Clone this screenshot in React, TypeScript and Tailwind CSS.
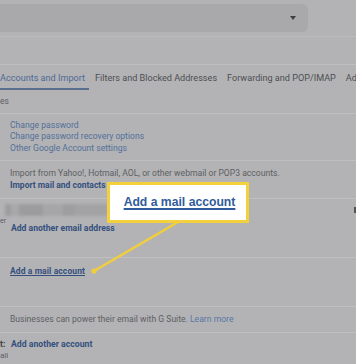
const Line = () => <div className="h-px bg-[#bfbfc1]" />;

export default function App() {
  return (
    <div
      className="relative w-[356px] h-[364px] overflow-hidden bg-[#b3b3b5] text-[8.6px] text-[#5d5f63]"
      style={{ fontFamily: 'Roboto, "Liberation Sans", Arial, sans-serif' }}
    >
      {/* search bar */}
      <div className="pt-[4px]">
        <div className="w-[308px] h-[28px] bg-[#a9a9ab] rounded-r-[6px] flex items-center justify-end pr-[12px]">
          <span className="w-0 h-0 border-l-[3.5px] border-r-[3.5px] border-t-[4px] border-l-transparent border-r-transparent border-t-[#3e3f42]" />
        </div>
      </div>
      <div className="mt-[4px] h-px bg-[#bcbcbe]" />
      <div className="h-[27px]" />
      <Line />

      {/* tabs */}
      <div className="h-[25px] flex items-center gap-[10px] whitespace-nowrap text-[9.1px] text-[#4d4f53] pt-[2px]">
        <div className="relative h-full flex items-center text-[#4d6a95]">
          Accounts and Import
          <div className="absolute left-0 right-[-4px] bottom-0 h-[2px] bg-[#5a6e8e]" />
        </div>
        <span>Filters and Blocked Addresses</span>
        <span>Forwarding and POP/IMAP</span>
        <span>Ad</span>
      </div>
      <div className="h-[23px] flex items-center text-[8.5px]">es</div>
      <Line />

      {/* change password */}
      <div className="h-[46px] flex flex-col justify-center pl-[10px] leading-[11.5px] text-[#52709a]">
        <span>Change password</span>
        <span>Change password recovery options</span>
        <span>Other Google Account settings</span>
      </div>
      <Line />

      {/* import */}
      <div className="h-[37px] flex flex-col justify-center pl-[10px] leading-[11.5px]">
        <span>Import from Yahoo!, Hotmail, AOL, or other webmail or POP3 accounts.</span>
        <span className="font-bold text-[#34507e] text-[8.5px]">Import mail and contacts</span>
      </div>
      <Line />

      {/* send mail as */}
      <div className="h-[58px] relative flex">
        <div className="w-[10px] pt-[17px] text-[7px]">er</div>
        <div className="flex flex-col pt-[4px]">
          <div className="flex h-[12px] ml-[-5px] w-[103px] blur-[1.5px] mt-[1px]">
            <div className="w-[6px] bg-[#9d9d9f]" />
            <div className="w-[8px] bg-[#a8a8aa]" />
            <div className="w-[24px] bg-[#9c9c9e]" />
            <div className="w-[20px] bg-[#a6a6a8]" />
            <div className="w-[12px] bg-[#9e9ea0]" />
            <div className="w-[33px] bg-[#a3a3a5]" />
          </div>
          <span className="mt-[6px] ml-[1px] font-bold text-[#34507e] text-[8.6px]">Add another email address</span>
        </div>
        <div className="absolute right-[-2px] top-[8px] w-[4px] h-[6px] bg-[#505256] blur-[0.5px]" />
      </div>
      <Line />

      {/* check mail */}
      <div className="h-[48px] pl-[10px] pt-[7px]">
        <span className="font-bold text-[#34507e] text-[8.5px] tracking-[0.1px] underline underline-offset-1">Add a mail account</span>
      </div>
      <Line />

      {/* g suite */}
      <div className="h-[25px] flex items-center pl-[10px]">
        Businesses can power their email with G Suite.&nbsp;<span className="text-[#5877a5]">Learn more</span>
      </div>
      <Line />

      {/* grant access */}
      <div className="flex pt-[5px] leading-[12px]">
        <div className="w-[11px] flex flex-col">
          <span className="font-bold text-[#3d3f43]">t:</span>
          <span className="text-[8px]">ail</span>
        </div>
        <span className="font-bold text-[#34507e] text-[8.7px]">Add another account</span>
      </div>

      {/* pointer line */}
      <svg className="absolute left-0 top-0 pointer-events-none" width="356" height="364">
        <line x1="94" y1="271" x2="178" y2="222" stroke="#f2cf3a" strokeWidth="2.5" strokeLinecap="round" />
        <circle cx="94" cy="271" r="2.6" fill="#f2cf3a" />
      </svg>

      {/* callout */}
      <div className="absolute left-[107px] top-[182px] w-[142px] h-[41px] bg-white border-[3px] border-[#f3d13d] flex items-center justify-center pl-[3px]">
        <span
          className="font-bold text-[12.2px] text-[#2f5b9c] underline underline-offset-2 decoration-[1.5px]"
          style={{ fontFamily: '"Liberation Sans", Arial, sans-serif' }}
        >
          Add a mail account
        </span>
      </div>
    </div>
  );
}
